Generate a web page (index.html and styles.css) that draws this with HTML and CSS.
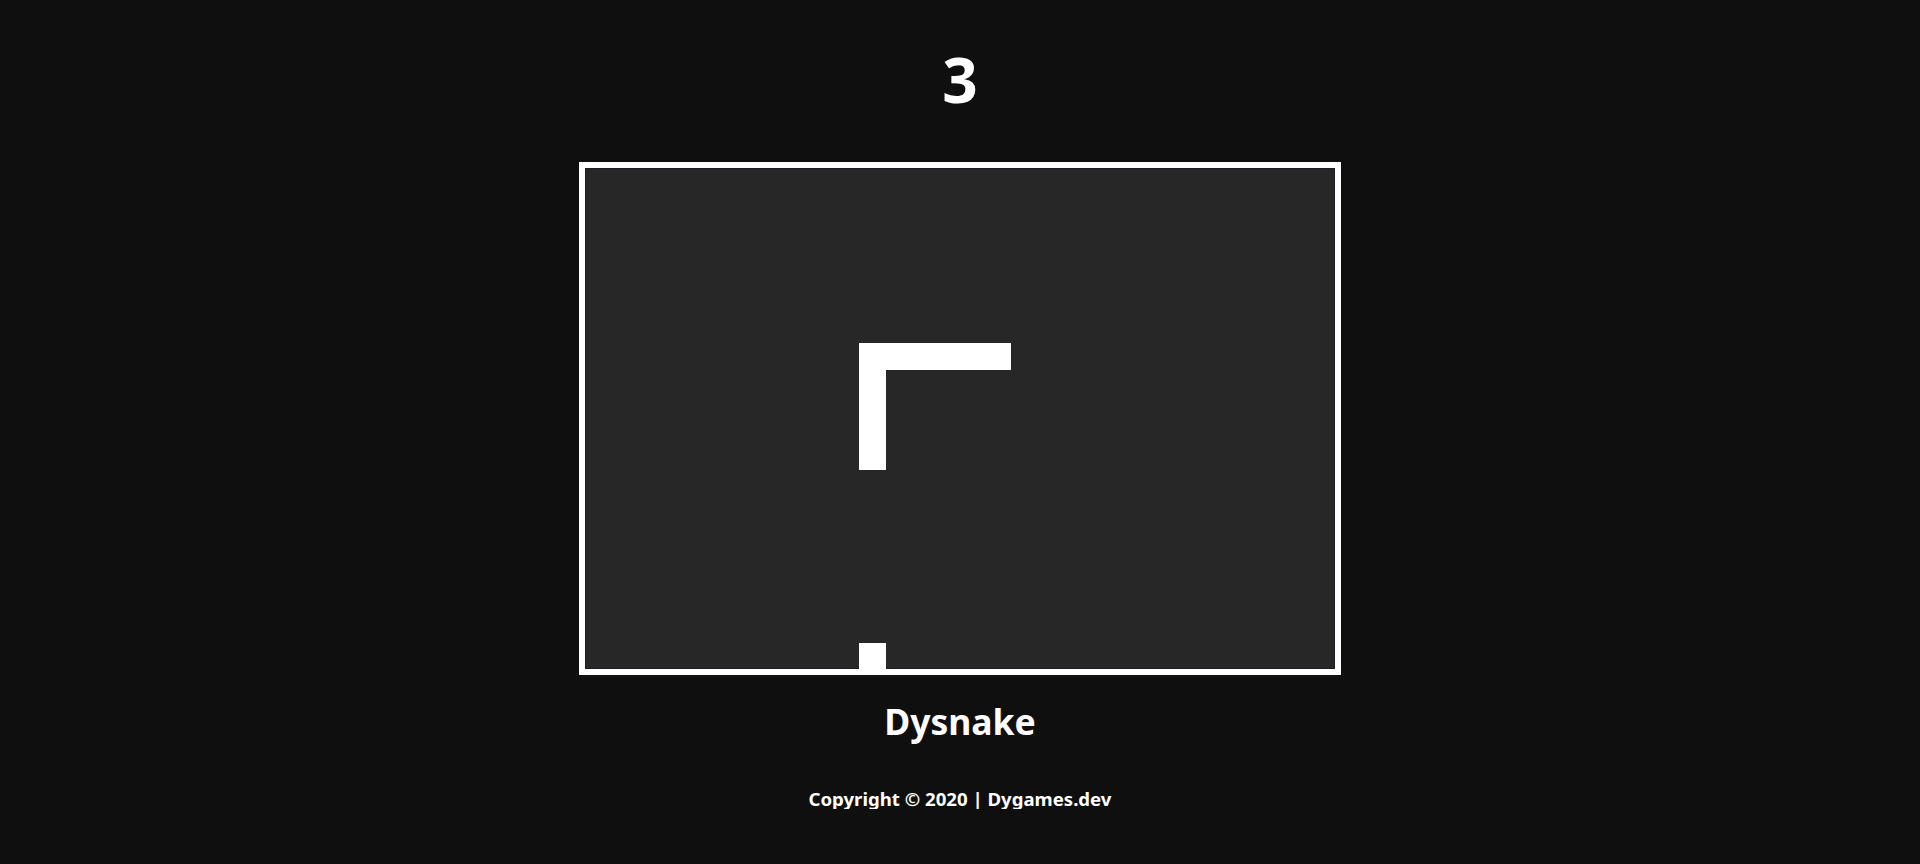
FILE: index.html
```html
<!DOCTYPE html>
<html lang="en">
<head>
<meta charset="utf-8">
<title>Dysnake</title>
<link rel="stylesheet" href="styles.css">
</head>
<body>
<main class="page">
  <div class="score">3</div>
  <div class="board">
    <div class="canvas">
      <div class="seg" style="left:273px;top:174px;width:152px;height:27px"></div>
      <div class="seg" style="left:273px;top:174px;width:27px;height:127px"></div>
      <div class="seg" style="left:273px;top:474px;width:27px;height:26px"></div>
    </div>
  </div>
  <h1 class="title">Dysnake</h1>
  <footer class="copy">Copyright © 2020 | Dygames.dev</footer>
</main>
</body>
</html>
```
FILE: styles.css
```css
html, body {
  margin: 0;
  padding: 0;
  background: #0f0f0f;
}
body {
  font-family: "Noto Sans", "DejaVu Sans", sans-serif;
  color: #ffffff;
}
.page {
  display: flex;
  flex-direction: column;
  align-items: center;
  padding-top: 48px;
}
.score {
  font-size: 62px;
  line-height: 62px;
  font-weight: 700;
  margin-bottom: 52px;
}
.board {
  border: 6px solid #ffffff;
  background: #1c2026;
  padding: 1px;
}
.canvas {
  position: relative;
  width: 748px;
  height: 499px;
  background: #272727;
}
.seg {
  position: absolute;
  background: #ffffff;
}
.title {
  margin: 29px 0 0;
  font-size: 35.5px;
  line-height: 35px;
  font-weight: 700;
}
.copy {
  margin-top: 50px;
  font-size: 18.6px;
  line-height: 20px;
  font-weight: 700;
}
```
